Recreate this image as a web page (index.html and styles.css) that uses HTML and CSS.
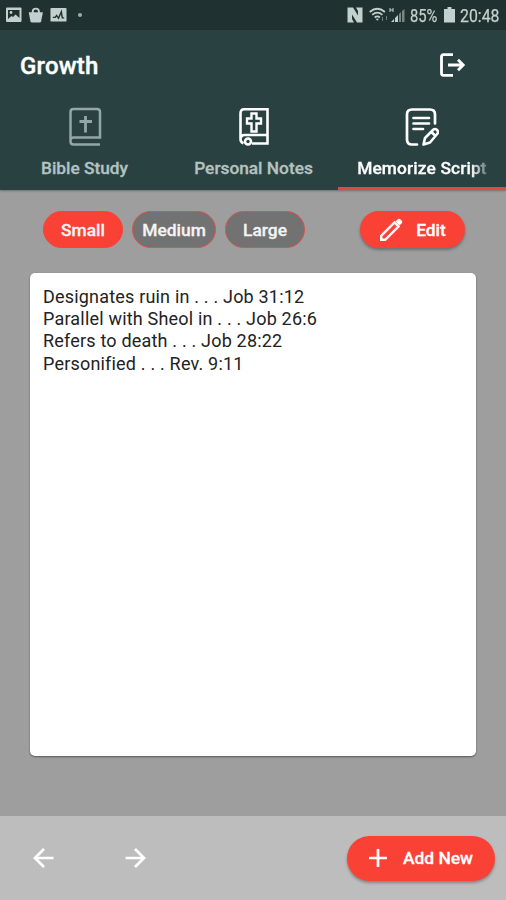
FILE: index.html
```html
<!DOCTYPE html>
<html lang="en">
<head>
    <meta charset="utf-8">
    <title>Growth</title>
    <link rel="stylesheet" href="styles.css">
</head>
<body>
    <div class="app">
        <div class="status-bar">
            <div class="status-left">
                <svg width="17" height="16" viewBox="0 0 17 16">
                    <rect x="1" y="0.500" width="15.500" height="14.500" rx="1" fill="#c3d0ce"/>
                    <path d="M3 3h11.500v8l-4-3.500-2.500 2.500-1.500-1-3.500 3z" fill="#1f3130"/>
                    <circle cx="6" cy="5.500" r="1.400" fill="#c3d0ce"/>
                </svg>
                <svg width="16" height="17" viewBox="0 0 17 17">
                    <path d="M5 6V4.500a3.300 3.300 0 0 1 6.600 0V6" fill="none" stroke="#c3d0ce" stroke-width="2"/>
                    <path d="M.8 5h15l-1.800 9.500q-.3 1.500-1.800 1.500H4.400q-1.500 0-1.800-1.500z" fill="#c3d0ce"/>
                </svg>
                <svg width="17" height="16" viewBox="0 0 18 16">
                    <rect x="0.500" y="0.500" width="17" height="14.500" rx="1" fill="#c3d0ce"/>
                    <path d="M3 10.500h2.500l1.500-2 2 3 3-7 1 6.500h2" fill="none" stroke="#1f3130" stroke-width="1.500"/>
                </svg>
                <span class="dot"></span>
            </div>
            <div class="status-right">
                <svg class="nfc" width="16" height="16" viewBox="0 0 16 16">
                    <path d="M.5.500H6l5 8V4L9 .500h6.500v15H10l-5-8V12l2 3.500H.5z" fill="#c3d0ce"/>
                </svg>
                <svg class="wifi" width="20" height="16" viewBox="0 0 20 16">
                    <g fill="none" stroke="#c3d0ce" stroke-width="1.700">
                        <path d="M.7 5q7.600-6.500 15.200 0"/>
                        <path d="M3.200 7.800q5.100-4.500 10.200 0"/>
                        <path d="M5.700 10.500q2.600-2.200 5.200 0"/>
                    </g>
                    <path d="M6.500 11.800h3.600l-1.800 2z" fill="#c3d0ce"/>
                    <path d="M13.500 10v4M17.500 9v4" stroke="#6c7d7b"/>
                </svg>
                <svg class="signal" width="16" height="16" viewBox="0 0 16 16">
                    <path d="M1 1v4M4 1v4M1 3h3" stroke="#c3d0ce" stroke-width="1" fill="none"/>
                    <path d="M2 15l3-3v3zM6 15v-4l3-3v7z" fill="#c3d0ce"/>
                    <path d="M10 15V7l2-2v10zM13 15V4l2.500-2v13z" fill="#758684"/>
                </svg>
                <span class="percent">85%</span>
                <svg class="battery" width="11" height="16" viewBox="0 0 11 16">
                    <path d="M3.500 0h4v2H11v13.500H0V2h3.500z" fill="#c3d0ce"/>
                </svg>
                <span class="clock">20:48</span>
            </div>
        </div>

        <header class="header">
            <h1>Growth</h1>
            <svg class="logout" width="28" height="26" viewBox="0 0 28 26" fill="none" stroke="#fff" stroke-width="2.800">
                <path d="M15 2.700H5.500q-2 0-2 2v16.600q0 2 2 2H15"/>
                <path d="M10 13h15.500M20 7.800l5.200 5.200-5.200 5.200"/>
            </svg>
        </header>

        <nav class="tabs">
            <div class="tab">
                <svg width="34" height="40" viewBox="0 0 34 40" fill="none" stroke="#92a7a6" stroke-width="2.500">
                    <path d="M32 37.500H5.500q-3 0-3-3V5q0-3 3-3H29q3 0 3 3v25.500H5.500q-3 0-3 3"/>
                    <path d="M17.500 9v16.500M11.500 14.500h12.500" stroke-width="2.800"/>
                </svg>
                <span class="label">Bible Study</span>
            </div>
            <div class="tab">
                <svg width="34" height="40" viewBox="0 0 34 40" fill="none" stroke="#fff" stroke-width="2.600">
                    <path d="M15 36.500h15.500V2.300H7q-3.500 0-3.500 4v26q0 3 3 4M3.500 32q.5-4 4-4h23"/>
                    <path d="M14.500 6.500h5v5h4.500v5h-4.500v8h-5v-8H10v-5h4.500z" stroke-width="2.400"/>
                    <circle cx="11" cy="34.500" r="3"/>
                </svg>
                <span class="label">Personal Notes</span>
            </div>
            <div class="tab active">
                <svg width="34" height="40" viewBox="0 0 34 40" fill="none" stroke="#fff" stroke-width="2.700" stroke-linecap="round">
                    <path d="M12 37.500H7q-5 0-5-5V7.500q0-5 5-5h18q5 0 5 5v9"/>
                    <path d="M8.500 11h15.500M8.500 16.500h15.500M8.500 22h9.500"/>
                    <path d="M18.500 37.500l1.500-6.500L28.500 22.500q1.500-1 3 0l1 1q1 1.500 0 3L25 35.500zM26.500 25l3.500 3.500" stroke-width="2.600" stroke-linejoin="round"/>
                </svg>
                <span class="label">Memorize Script</span>
            </div>
        </nav>

        <main class="content">
            <div class="toolbar">
                <button class="chip selected">Small</button>
                <button class="chip medium">Medium</button>
                <button class="chip">Large</button>
                <button class="edit">
                    <svg width="24" height="24" viewBox="0 0 24 24" fill="none" stroke="#fff" stroke-width="2.400">
                        <path d="M2.200 21.800v-4L15.500 4.500l4 4L6.200 21.800z"/>
                        <path d="M16.500 3.500l2.500-2.500q1-.7 2 0l2 2q.7 1 0 2l-2.500 2.500z" fill="#fff" stroke="none"/>
                    </svg>
                    <span>Edit</span>
                </button>
            </div>
            <div class="card">
                <p>Designates ruin in . . . Job 31:12</p>
                <p>Parallel with Sheol in . . . Job 26:6</p>
                <p>Refers to death . . . Job 28:22</p>
                <p>Personified . . . Rev. 9:11</p>
            </div>
        </main>

        <footer class="footer">
            <svg class="arrow" width="22" height="22" viewBox="0 0 22 22" fill="none" stroke="#fff" stroke-width="2.700">
                <path d="M20.500 11H3M11 2l-9 9 9 9"/>
            </svg>
            <svg class="arrow" width="22" height="22" viewBox="0 0 22 22" fill="none" stroke="#fff" stroke-width="2.700">
                <path d="M.5 11h18M10 2l9 9-9 9"/>
            </svg>
            <button class="add">
                <svg width="18" height="18" viewBox="0 0 18 18" stroke="#fff" stroke-width="2.700">
                    <path d="M9 0v18M0 9h18"/>
                </svg>
                <span>Add New</span>
            </button>
        </footer>
    </div>
</body>
</html>
```
FILE: styles.css
```css
* {
    box-sizing: border-box;
}
body {
    margin: 0;
    font-family: Roboto, sans-serif;
    background-color: #9e9e9e;
}
h1, p {
    margin: 0;
}
svg {
    display: block;
    flex-shrink: 0;
}
.app {
    display: flex;
    flex-direction: column;
    height: 900px;
    width: 506px;
    overflow: hidden;
}
.status-bar {
    height: 30px;
    display: flex;
    justify-content: space-between;
    align-items: center;
    padding: 0 6px 0 5px;
    background-color: #1f3130;
    color: #c3d0ce;
    font-size: 18px;
}
.status-left, .status-right {
    display: flex;
    align-items: center;
}
.status-left {
    gap: 6px;
}
.dot {
    width: 4px;
    height: 4px;
    margin-left: 5px;
    border-radius: 50%;
    background-color: #9fadab;
}
.nfc {
    margin-right: 6px;
}
.signal {
    margin-right: 5px;
}
.percent, .clock {
    padding-top: 1px;
    transform-origin: left center;
    -webkit-text-stroke: 0.25px #c3d0ce;
}
.percent {
    width: 28px;
    margin-right: 6px;
    transform: scaleX(0.82);
}
.battery {
    margin-right: 5px;
}
.clock {
    width: 40px;
    transform: scaleX(0.88);
}
.header {
    height: 70px;
    display: flex;
    align-items: center;
    justify-content: space-between;
    padding: 0 40px 0 20px;
    background-color: #294241;
    color: #fff;
}
h1 {
    padding-top: 1px;
    font-size: 24px;
    font-weight: 500;
    letter-spacing: 0.2px;
    -webkit-text-stroke: 0.4px #fff;
}
.tabs {
    height: 90px;
    display: grid;
    grid-template-columns: 169px 169px 168px;
    background-color: #294241;
    box-shadow: 0 1px 2px rgba(0, 0, 0, 0.3);
}
.tab {
    display: flex;
    flex-direction: column;
    align-items: center;
    padding-top: 7px;
    color: #b4c3c2;
    font-size: 17.3px;
    font-weight: 500;
}
.tab.active {
    color: #fff;
    border-bottom: 3px solid #e2493f;
}
.label {
    margin-top: 11px;
    line-height: 21px;
    white-space: nowrap;
    -webkit-text-stroke: 0.3px;
}
.active .label {
    letter-spacing: 0.15px;
    -webkit-mask-image: linear-gradient(to right, #000 114px, transparent 136px);
    mask-image: linear-gradient(to right, #000 114px, transparent 136px);
}
.content {
    flex: 1;
    padding: 21px 30px 0;
}
.toolbar {
    display: flex;
    gap: 9px;
    padding: 0 11px 0 13px;
}
button {
    display: flex;
    align-items: center;
    justify-content: center;
    border: none;
    color: #fff;
    background-color: #f94235;
    font-family: inherit;
    font-size: 17.4px;
    font-weight: 500;
    padding: 0;
    -webkit-text-stroke: 0.3px;
}
.chip {
    width: 80px;
    height: 37px;
    border: 1.5px solid #d9534c;
    border-radius: 19px;
    background-color: #727272;
    color: #f4f4f4;
}
.chip.selected {
    background-color: #f94235;
    border-color: #f94235;
}
.chip.medium {
    width: 84px;
}
.edit {
    width: 105px;
    height: 37px;
    margin-left: auto;
    border-radius: 19px;
    gap: 13px;
    box-shadow: 0 2px 3px rgba(0, 0, 0, 0.3);
}
.card {
    height: 483px;
    margin-top: 25px;
    padding: 13px;
    border-radius: 5px;
    background-color: #fff;
    color: #222;
    box-shadow: 0 1px 2px rgba(0, 0, 0, 0.45);
    font-size: 18px;
    line-height: 22.2px;
    letter-spacing: 0.19px;
}
.footer {
    height: 84px;
    display: flex;
    align-items: center;
    padding: 0 11px 0 33px;
    background-color: #bdbdbd;
}
.arrow {
    margin-right: 70px;
}
.add {
    width: 148px;
    height: 45px;
    margin-left: auto;
    border-radius: 23px;
    gap: 16px;
    box-shadow: 0 2px 3px rgba(0, 0, 0, 0.3);
}
```
